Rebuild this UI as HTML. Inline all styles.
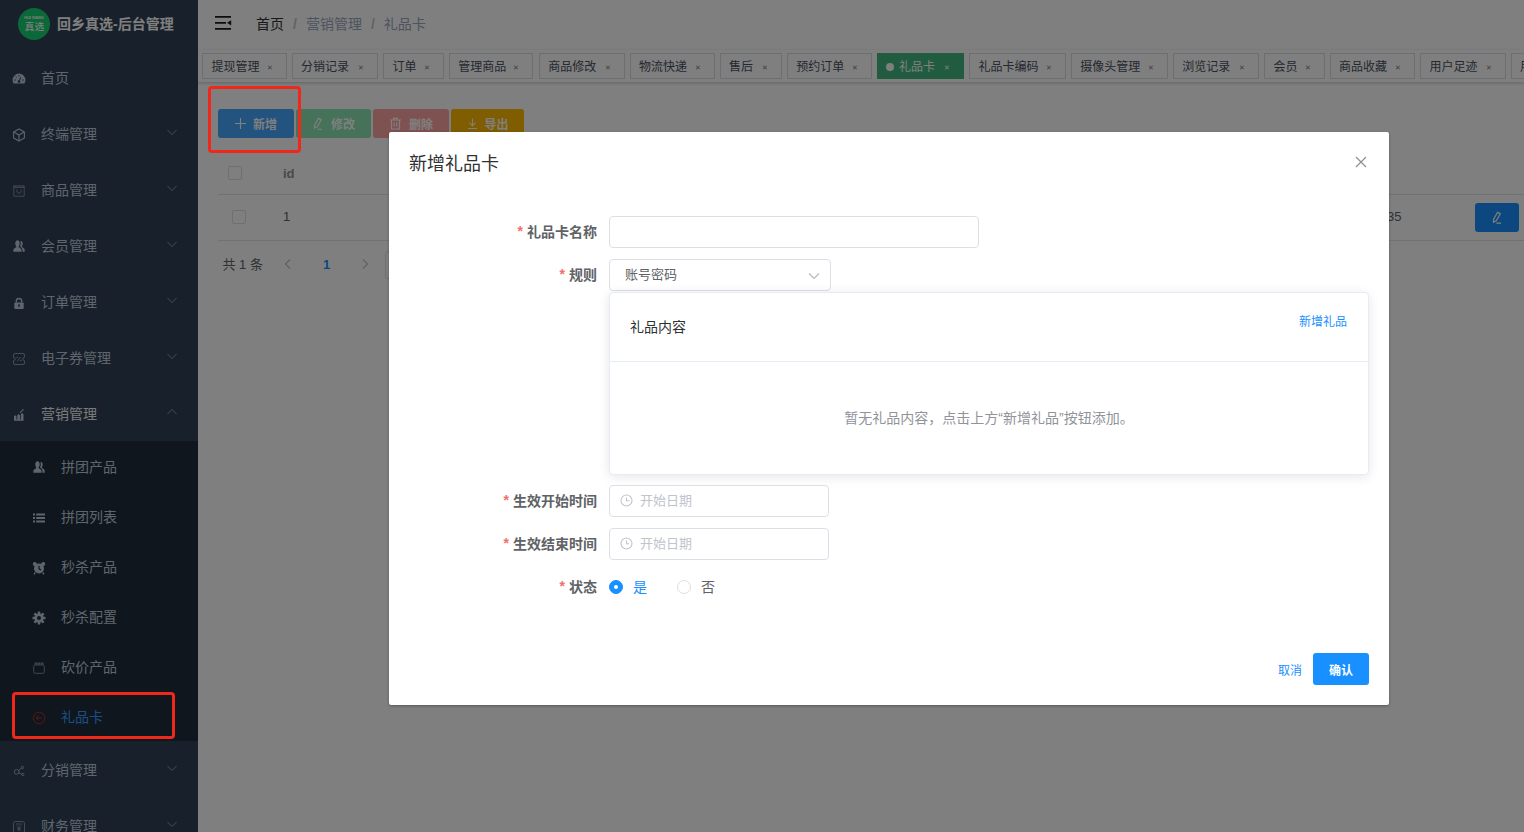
<!DOCTYPE html>
<html lang="zh-CN">
<head>
<meta charset="utf-8">
<title>回乡真选-后台管理</title>
<style>
*{box-sizing:border-box;margin:0;padding:0}
html,body{width:1524px;height:832px;overflow:hidden;background:#fff}
body{font-family:"Liberation Sans","Noto Sans CJK SC",sans-serif;font-size:14px;color:#606266;position:relative;-webkit-font-smoothing:antialiased}
.abs{position:absolute}
svg{display:block}
/* ---------- sidebar ---------- */
#sidebar{position:absolute;left:0;top:0;width:198px;height:832px;background:#304156;overflow:hidden}
#logo{position:absolute;left:0;top:0;width:198px;height:50px;background:#304156}
#logo .circ{position:absolute;left:18px;top:8px;width:32px;height:32px;border-radius:50%;background:#17d070;color:#fff;text-align:center}
#logo .circ .en{position:absolute;left:0;width:32px;top:8px;font-size:3.800px;line-height:5px;font-weight:bold;letter-spacing:0}
#logo .circ .cn{position:absolute;left:0;width:32px;top:12px;font-size:9.500px;line-height:14px;white-space:nowrap;letter-spacing:-1px;font-weight:500}
#logo .tt{position:absolute;left:57px;top:0;line-height:48px;font-size:14px;font-weight:bold;color:#fff;white-space:nowrap}
.mi{position:absolute;left:0;width:198px;height:56px;line-height:56px;color:#bfcbd9;font-size:14px}
.mi .ic{position:absolute;left:12px;top:22px;width:14px;height:14px}
.mi .tx{position:absolute;left:41px;top:0;white-space:nowrap}
.mi .ar{position:absolute;left:166px;top:19.500px;width:12px;height:12px}
#sub{position:absolute;left:0;top:441px;width:198px;height:300px;background:#1f2d3d}
.si{position:absolute;left:0;width:198px;height:50px;margin-top:1px;line-height:50px;color:#bfcbd9;font-size:14px}
.si .ic{position:absolute;left:32px;top:19px;width:14px;height:14px}
.si .tx{position:absolute;left:61px;top:0;white-space:nowrap}
/* ---------- main ---------- */
#main{position:absolute;left:198px;top:0;width:1326px;height:832px;background:#fff;overflow:hidden}
#navbar{position:absolute;left:0;top:0;width:1326px;height:50px;background:#fff;box-shadow:0 1px 4px rgba(0,21,41,.08)}
#bc{position:absolute;left:58px;top:0;line-height:48px;font-size:14px;white-space:nowrap;color:#97a8be}
#bc .h{color:#303133}
#bc .sep{color:#c0c4cc;margin:0 9px;font-weight:bold}
#tags{position:absolute;left:0;top:50px;width:1326px;height:33px;background:#fff;border-bottom:1px solid #d8dce5;box-shadow:0 1px 3px 0 rgba(0,0,0,.12),0 0 3px 0 rgba(0,0,0,.04)}
.tag{position:absolute;top:3px;height:26px;line-height:26px;border:1px solid #d8dce5;color:#495060;background:#fff;font-size:12px;padding-left:8px;white-space:nowrap;overflow:hidden}
.tag i{font-style:normal;position:absolute;right:12px;top:0;font-size:11px;color:#7b8190;transform:scale(.65)}
.tag.on{background:#42b983;border-color:#42b983;color:#fff}
.tag.on i{color:#fff}
.tag.on:before{content:"";display:inline-block;width:8px;height:8px;border-radius:50%;background:#fff;margin-right:5px;position:relative;top:0}
.btn{position:absolute;top:109px;height:29px;border-radius:3px;color:#fff;font-size:12px;line-height:29px;white-space:nowrap}
.btn svg{position:absolute;top:8px}
.btn span{position:absolute;top:2px;font-weight:700}
/* table */
#thead{position:absolute;left:20px;top:152px;width:1306px;height:43px;border-bottom:1px solid #dfe6ec}
#trow{position:absolute;left:20px;top:195px;width:1306px;height:46px;border-bottom:1px solid #dfe6ec}
.cb{position:absolute;width:14px;height:14px;border:1px solid #dcdfe6;border-radius:2px;background:#fff}
/* ---------- overlay ---------- */
#mask{position:absolute;left:0;top:0;width:1524px;height:832px;background:rgba(0,0,0,.5)}
/* ---------- dialog ---------- */
#dlg{position:absolute;left:389px;top:132px;width:1000px;height:573px;background:#fff;border-radius:2px;box-shadow:0 1px 3px rgba(0,0,0,.3)}
#dlg .title{position:absolute;left:20px;top:20px;font-size:18px;line-height:24px;color:#303133;white-space:nowrap}
.lab{position:absolute;left:20px;width:188px;text-align:right;font-size:14px;font-weight:bold;color:#606266;line-height:32px;white-space:nowrap}
.lab b{color:#f56c6c;font-weight:bold;margin-right:4px;position:relative;top:-1px}
.inp{position:absolute;height:32px;border:1px solid #dcdfe6;border-radius:4px;background:#fff;font-size:13px;line-height:30px;color:#606266;white-space:nowrap}
.ph{color:#c0c4cc}
#card{position:absolute;left:220px;top:160px;width:760px;height:183px;border:1px solid #e6ebf5;border-radius:4px;background:#fff;box-shadow:0 2px 12px 0 rgba(0,0,0,.1)}
#card .hd{position:absolute;left:0;top:0;width:758px;height:69px;border-bottom:1px solid #e6ebf5}
.radio{position:absolute;width:14px;height:14px;border-radius:50%;border:1px solid #dcdfe6;background:#fff}
.radio.on{border-color:#1890ff;background:#1890ff}
.radio.on:after{content:"";position:absolute;left:4px;top:4px;width:4px;height:4px;border-radius:50%;background:#fff}
/* ---------- annotations ---------- */
.red{position:absolute;border:3px solid #f0281c;border-radius:4px}
</style>
</head>
<body>
<!-- ================= BACKGROUND APP ================= -->
<div id="sidebar">
  <div id="logo">
    <div class="circ"><div class="en">HUI XIANG</div><div class="cn">真 选</div></div>
    <div class="tt">回乡真选-后台管理</div>
  </div>
  <div class="mi" style="top:50px"><svg class="ic" viewBox="0 0 14 14"><path d="M7 1.6A6.4 6.4 0 0 0 .6 8c0 1.4.4 2.6 1.100 3.600h10.600A6.300 6.300 0 0 0 13.400 8 6.400 6.400 0 0 0 7 1.600z" fill="#bfcbd9"/><g stroke="#304156" stroke-width="1" fill="none"><path d="M7 9.500l1.800-4.300M2.300 8h1.500M10.200 8h1.500M7 3.200v1.300M3.700 4.700l.9.900"/></g><circle cx="7" cy="9.600" r="1.300" fill="#304156"/></svg><span class="tx">首页</span></div>
  <div class="mi" style="top:106px"><svg class="ic" viewBox="0 0 14 14" fill="none" stroke="#bfcbd9" stroke-width="1.100" stroke-linejoin="round"><path d="M7 .9l5.400 3v6.200L7 13.100 1.600 10.100V3.900z"/><path d="M1.800 4L7 7l5.200-3M7 7v6"/></svg><span class="tx">终端管理</span><svg class="ar" viewBox="0 0 12 12" fill="none" stroke="#8f9baa" stroke-width="1"><path d="M1.500 4l4.500 4.500L10.500 4"/></svg></div>
  <div class="mi" style="top:162px"><svg class="ic" viewBox="0 0 14 14" fill="none" stroke="#7f8b9b" stroke-width="1"><path d="M1.800 1.800h10.400v10.400H1.800z"/><path d="M1.800 3.300h10.400" stroke-width="1.400"/><path d="M4.800 5.600v1.400a2.200 2.200 0 0 0 4.400 0V5.600"/></svg><span class="tx">商品管理</span><svg class="ar" viewBox="0 0 12 12" fill="none" stroke="#8f9baa" stroke-width="1"><path d="M1.500 4l4.500 4.500L10.500 4"/></svg></div>
  <div class="mi" style="top:218px"><svg class="ic" viewBox="0 0 14 14" fill="#bfcbd9" style="transform:translate(0,-.5px) scale(.86,1.080)"><path d="M5.300 1.200c1.500 0 2.500 1.200 2.500 2.900 0 1.200-.5 2.200-1.200 2.800v.7c1.600.5 3.400 1.400 3.400 2.700v1.500H.4v-1.500c0-1.300 1.800-2.200 3.400-2.700v-.7C3.100 6.300 2.700 5.300 2.700 4.100c0-1.700 1-2.900 2.600-2.900z"/><path d="M9.200 2c1.300 0 2.100 1 2.100 2.500 0 1-.4 1.900-1 2.400v.6c1.400.4 3.300 1.200 3.300 2.400v1.900h-2.500v-1.500c0-1.500-1.400-2.500-2.900-3.100.5-.8.800-1.900.8-3.100 0-.7-.1-1.300-.4-1.900.2-.1.400-.2.600-.2z"/></svg><span class="tx">会员管理</span><svg class="ar" viewBox="0 0 12 12" fill="none" stroke="#8f9baa" stroke-width="1"><path d="M1.500 4l4.500 4.500L10.500 4"/></svg></div>
  <div class="mi" style="top:274px"><svg class="ic" viewBox="0 0 14 14" style="transform:translate(0,.5px) scale(.9,.88)"><path d="M4 6V4.300a3 3 0 0 1 6 0V6" fill="none" stroke="#bfcbd9" stroke-width="1.500"/><rect x="1.800" y="5.800" width="10.400" height="7.400" rx="1" fill="#bfcbd9"/><circle cx="7" cy="9" r="1.100" fill="#304156"/><rect x="6.500" y="9.200" width="1" height="2" fill="#304156"/></svg><span class="tx">订单管理</span><svg class="ar" viewBox="0 0 12 12" fill="none" stroke="#8f9baa" stroke-width="1"><path d="M1.500 4l4.500 4.500L10.500 4"/></svg></div>
  <div class="mi" style="top:330px"><svg class="ic" viewBox="0 0 14 14" fill="none" stroke="#8d99a8" stroke-width="1"><path d="M3 1.500h8a1.500 1.500 0 0 1 1.500 1.500v2.300a1.700 1.700 0 0 0 0 3.400V11a1.500 1.500 0 0 1-1.500 1.500H3A1.500 1.500 0 0 1 1.500 11V8.700a1.700 1.700 0 0 0 0-3.400V3A1.500 1.500 0 0 1 3 1.500z"/><path d="M5.400 9l3.200-4" stroke-width=".9"/><circle cx="5.300" cy="5.500" r=".8" fill="#8d99a8" stroke="none"/><circle cx="8.700" cy="8.500" r=".8" fill="#8d99a8" stroke="none"/></svg><span class="tx">电子券管理</span><svg class="ar" viewBox="0 0 12 12" fill="none" stroke="#8f9baa" stroke-width="1"><path d="M1.500 4l4.500 4.500L10.500 4"/></svg></div>
  <div class="mi" style="top:386px;color:#f4f4f5"><svg class="ic" viewBox="0 0 14 14" fill="#bfcbd9"><path d="M2 12.800V8.300l1.200-1.100 1.200 1.100v3.300h.9V7.200l1.300-1.200 1.300 1.200v4.400h.9V6.300L10.100 5l1.400 1.300v6.500z"/><path d="M8 4.600l3.500-3.200" fill="none" stroke="#bfcbd9" stroke-width="1.100"/></svg><span class="tx">营销管理</span><svg class="ar" viewBox="0 0 12 12" fill="none" stroke="#8f9baa" stroke-width="1"><path d="M1.500 8L6 3.500 10.500 8"/></svg></div>
  <div id="sub">
    <div class="si" style="top:0"><svg class="ic" viewBox="0 0 14 14" fill="#bfcbd9" style="transform:translate(0,-.5px) scale(.86,1.080)"><path d="M5.300 1.200c1.500 0 2.500 1.200 2.500 2.900 0 1.200-.5 2.200-1.200 2.800v.7c1.600.5 3.400 1.400 3.400 2.700v1.500H.4v-1.500c0-1.300 1.800-2.200 3.400-2.700v-.7C3.100 6.300 2.700 5.300 2.700 4.100c0-1.700 1-2.900 2.600-2.900z"/><path d="M9.200 2c1.300 0 2.100 1 2.100 2.500 0 1-.4 1.900-1 2.400v.6c1.400.4 3.300 1.200 3.300 2.400v1.900h-2.500v-1.500c0-1.500-1.400-2.500-2.900-3.100.5-.8.800-1.900.8-3.100 0-.7-.1-1.300-.4-1.900.2-.1.400-.2.600-.2z"/></svg><span class="tx">拼团产品</span></div>
    <div class="si" style="top:50px"><svg class="ic" viewBox="0 0 14 14" fill="#bfcbd9"><path d="M1 2.500h2v2H1zM4.200 2.500H13v2H4.200zM1 6h2v2H1zM4.200 6H13v2H4.200zM1 9.500h2v2H1zM4.200 9.500H13v2H4.200z"/></svg><span class="tx">拼团列表</span></div>
    <div class="si" style="top:100px"><svg class="ic" viewBox="0 0 14 14" fill="#bfcbd9"><circle cx="2.800" cy="3" r="2"/><circle cx="11.200" cy="3" r="2"/><circle cx="7" cy="7.500" r="5"/><path d="M3.300 11.500l-1.300 1.800M10.700 11.500l1.300 1.800" stroke="#bfcbd9" stroke-width="1.300"/><path d="M7 4.800v3l2 1.200" fill="none" stroke="#1f2d3d" stroke-width="1.200"/></svg><span class="tx">秒杀产品</span></div>
    <div class="si" style="top:150px"><svg class="ic" viewBox="0 0 14 14"><g fill="#bfcbd9"><circle cx="7" cy="7" r="4.600"/><rect x="5.700" y=".5" width="2.600" height="13" rx=".4" transform="rotate(0 7 7)"/><rect x="5.700" y=".5" width="2.600" height="13" rx=".4" transform="rotate(45 7 7)"/><rect x="5.700" y=".5" width="2.600" height="13" rx=".4" transform="rotate(90 7 7)"/><rect x="5.700" y=".5" width="2.600" height="13" rx=".4" transform="rotate(135 7 7)"/></g><circle cx="7" cy="7" r="2" fill="#1f2d3d"/></svg><span class="tx">秒杀配置</span></div>
    <div class="si" style="top:200px"><svg class="ic" viewBox="0 0 14 14" fill="none" stroke="#7f8b9b" stroke-width="1"><rect x="1.700" y="4" width="10.600" height="8.300" rx="1.500"/><path d="M2.600 2.600h2.600M5.700 2.600h2.600M8.800 2.600h2.600" stroke-width="2.200"/></svg><span class="tx">砍价产品</span></div>
    <div class="si" style="top:250px;color:#3c9cff"><svg class="ic" viewBox="0 0 14 14" fill="none" stroke="#c02c1e" stroke-width=".9"><circle cx="7" cy="7" r="5.800"/><path d="M4 7h6M6.500 4.500L4 7l2.500 2.500" stroke-width=".9"/></svg><span class="tx">礼品卡</span></div>
  </div>
  <div class="mi" style="top:742px"><svg class="ic" viewBox="0 0 14 14" fill="none" stroke="#a3afbd" stroke-width="1.100" style="transform:scale(.88)"><circle cx="4.300" cy="8" r="2.700"/><circle cx="11" cy="3" r="1.300"/><circle cx="11.300" cy="11" r="1.300"/><path d="M6.600 6.500L9.800 3.800M6.900 9l3.200 1.500"/></svg><span class="tx">分销管理</span><svg class="ar" viewBox="0 0 12 12" fill="none" stroke="#8f9baa" stroke-width="1"><path d="M1.500 4l4.500 4.500L10.500 4"/></svg></div>
  <div class="mi" style="top:798px"><svg class="ic" viewBox="0 0 14 14" fill="none" stroke="#8d99a8" stroke-width="1"><rect x="1.500" y="1.500" width="11" height="11.500" rx="2"/><path d="M4 4h6" stroke-width=".9"/><path d="M5 5.500l2 2.500 2-2.500M7 8v3.200M5.200 8.300h3.600M5.200 9.800h3.600" stroke-width=".9"/></svg><span class="tx">财务管理</span><svg class="ar" viewBox="0 0 12 12" fill="none" stroke="#8f9baa" stroke-width="1"><path d="M1.500 4l4.500 4.500L10.500 4"/></svg></div>
</div>
<div id="main">
  <div id="navbar">
    <svg class="abs" style="left:17px;top:15px" width="17" height="16" viewBox="0 0 17 16" fill="none" stroke="#1a1a1a" stroke-width="1.800"><path d="M0 1.800h16M0 7.800h11M0 13.900h16"/><path d="M16.200 5.200L12 7.800l4.200 2.700z" fill="#1a1a1a" stroke="none"/></svg>
    <div id="bc"><span class="h">首页</span><span class="sep">/</span><span>营销管理</span><span class="sep">/</span><span>礼品卡</span></div>
  </div>
  <div id="tags">
    <div class="tag" style="left:4.4px;width:84.4px">提现管理<i>✕</i></div>
    <div class="tag" style="left:94.0px;width:85.5px">分销记录<i>✕</i></div>
    <div class="tag" style="left:185.4px;width:60.2px">订单<i>✕</i></div>
    <div class="tag" style="left:251.3px;width:84.2px">管理商品<i>✕</i></div>
    <div class="tag" style="left:341.2px;width:85.5px">商品修改<i>✕</i></div>
    <div class="tag" style="left:432.1px;width:84.6px">物流快递<i>✕</i></div>
    <div class="tag" style="left:522.0px;width:61.6px">售后<i>✕</i></div>
    <div class="tag" style="left:589.2px;width:84.6px">预约订单<i>✕</i></div>
    <div class="tag on" style="left:679.0px;width:86.7px">礼品卡<i>✕</i></div>
    <div class="tag" style="left:771.4px;width:96.3px">礼品卡编码<i>✕</i></div>
    <div class="tag" style="left:873.3px;width:96.3px">摄像头管理<i>✕</i></div>
    <div class="tag" style="left:975.3px;width:85.4px">浏览记录<i>✕</i></div>
    <div class="tag" style="left:1066.4px;width:60.4px">会员<i>✕</i></div>
    <div class="tag" style="left:1132.0px;width:84.7px">商品收藏<i>✕</i></div>
    <div class="tag" style="left:1222.4px;width:85.3px">用户足迹<i>✕</i></div>
    <div class="tag" style="left:1313.0px;width:60.0px">用户<i>✕</i></div>
  </div>
  <div class="btn" style="left:20px;width:76px;background:#46a6ff"><svg style="left:16px" width="13" height="13" viewBox="0 0 13 13" fill="none" stroke="#fff" stroke-width="1.150"><path d="M6.500 1v11M1 6.500h11"/></svg><span style="left:35px">新增</span></div>
  <div class="btn" style="left:98px;width:75px;background:#8ae4b2"><svg style="left:15px" width="13" height="13" viewBox="0 0 13 13" fill="none" stroke="#fff" stroke-width="1.150"><path d="M7.600 1.200l2.700 1.500-4 7.200-2.800 1.300.1-3zM6.300 12.200h4.700"/></svg><span style="left:35px">修改</span></div>
  <div class="btn" style="left:175px;width:76px;background:#ffa4a4"><svg style="left:16px" width="13" height="13" viewBox="0 0 13 13" fill="none" stroke="#fff" stroke-width="1.150"><path d="M1 3h11M4.500 3V1.300h4V3M2.500 3v9h8V3M5.200 5.500v4M7.800 5.500v4"/></svg><span style="left:36px">删除</span></div>
  <div class="btn" style="left:253.400px;width:72.300px;background:#ffba00"><svg style="left:15px" width="13" height="13" viewBox="0 0 13 13" fill="none" stroke="#fff" stroke-width="1.150"><path d="M6.500 1.500v7M3.500 5.800l3 3 3-3M2 11.500h9"/></svg><span style="left:33px">导出</span></div>
  <div id="thead"><div class="cb" style="left:10px;top:14px"></div><div class="abs" style="left:65px;top:0;line-height:44px;font-size:13px;font-weight:bold;color:#909399">id</div></div>
  <div id="trow"><div class="cb" style="left:14px;top:15px"></div><div class="abs" style="left:65px;top:0;line-height:44px;font-size:13px;color:#606266">1</div>
    <div class="abs" style="right:122.500px;top:0;line-height:44px;font-size:13px;color:#606266;white-space:nowrap">2024-05-16 10:21:35</div>
    <div class="abs" style="left:1257px;top:8px;width:44px;height:29px;border-radius:3px;background:#1890ff"><svg class="abs" style="left:15px;top:8px" width="13" height="13" viewBox="0 0 13 13" fill="none" stroke="#fff" stroke-width="1.200"><path d="M7.600 1.200l2.700 1.500-4 7.200-2.800 1.300.1-3zM6.300 12.200h4.700"/></svg></div>
  </div>
  <div class="abs" style="left:24.500px;top:250px;line-height:29px;font-size:13px;color:#606266;white-space:nowrap">共 1 条</div>
  <svg class="abs" style="left:84px;top:258px" width="12" height="12" viewBox="0 0 12 12" fill="none" stroke="#c0c4cc" stroke-width="1.300"><path d="M8 1.500L3.500 6 8 10.500"/></svg>
  <div class="abs" style="left:125px;top:250px;line-height:29px;font-size:13px;font-weight:bold;color:#1890ff">1</div>
  <svg class="abs" style="left:161px;top:258px" width="12" height="12" viewBox="0 0 12 12" fill="none" stroke="#c0c4cc" stroke-width="1.300"><path d="M4 1.500L8.500 6 4 10.500"/></svg>
  <div class="abs" style="left:187px;top:251px;width:100px;height:28px;border:1px solid #dcdfe6;border-radius:3px"></div>
</div>
<!-- ================= OVERLAY ================= -->
<div id="mask"></div>
<!-- ================= DIALOG ================= -->
<div id="dlg">
  <div class="title">新增礼品卡</div>
  <svg class="abs" style="left:966px;top:24px" width="12" height="12" viewBox="0 0 12 12" fill="none" stroke="#8a8d93" stroke-width="1.200"><path d="M1 1l10 10M11 1L1 11"/></svg>
  <div class="lab" style="top:84px"><b>*</b>礼品卡名称</div>
  <div class="inp" style="left:220px;top:84px;width:370px"></div>
  <div class="lab" style="top:127px"><b>*</b>规则</div>
  <div class="inp" style="left:220px;top:127px;width:222px;padding-left:15px">账号密码<svg class="abs" style="left:198px;top:10px" width="12" height="12" viewBox="0 0 12 12" fill="none" stroke="#b6bac2" stroke-width="1.200"><path d="M1 3.500l5 5 5-5"/></svg></div>
  <div id="card">
    <div class="hd"></div>
    <div class="abs" style="left:20px;top:18px;line-height:32px;font-size:14px;color:#303133;white-space:nowrap">礼品内容</div>
    <div class="abs" style="right:21px;top:19px;line-height:20px;font-size:12px;color:#1890ff;white-space:nowrap">新增礼品</div>
    <div class="abs" style="left:0;top:105px;width:758px;text-align:center;line-height:40px;font-size:14px;color:#909399;white-space:nowrap">暂无礼品内容，点击上方“新增礼品”按钮添加。</div>
  </div>
  <div class="lab" style="top:353px"><b>*</b>生效开始时间</div>
  <div class="inp" style="left:220px;top:353px;width:220px;padding-left:30px"><svg class="abs" style="left:10px;top:8px" width="13" height="13" viewBox="0 0 13 13" fill="none" stroke="#c0c4cc" stroke-width="1.100"><circle cx="6.500" cy="6.500" r="5.500"/><path d="M6.500 3.500v3.300h2.800"/></svg><span class="ph">开始日期</span></div>
  <div class="lab" style="top:396px"><b>*</b>生效结束时间</div>
  <div class="inp" style="left:220px;top:396px;width:220px;padding-left:30px"><svg class="abs" style="left:10px;top:8px" width="13" height="13" viewBox="0 0 13 13" fill="none" stroke="#c0c4cc" stroke-width="1.100"><circle cx="6.500" cy="6.500" r="5.500"/><path d="M6.500 3.500v3.300h2.800"/></svg><span class="ph">开始日期</span></div>
  <div class="lab" style="top:439px"><b>*</b>状态</div>
  <div class="radio on" style="left:220px;top:448px"></div>
  <div class="abs" style="left:244px;top:439px;line-height:32px;font-size:14px;color:#1890ff">是</div>
  <div class="radio" style="left:288px;top:448px"></div>
  <div class="abs" style="left:312px;top:439px;line-height:32px;font-size:14px;color:#606266">否</div>
  <div class="abs" style="left:889px;top:523px;line-height:32px;font-size:12px;color:#1890ff;white-space:nowrap">取消</div>
  <div class="abs" style="left:924px;top:521px;width:56px;height:32px;border-radius:3px;background:#1890ff;color:#fff;font-size:12px;font-weight:bold;line-height:36px;text-align:center">确认</div>
</div>
<!-- ================= ANNOTATIONS ================= -->
<div class="red" style="left:207.500px;top:85.500px;width:93px;height:67px"></div>
<div class="red" style="left:11.500px;top:692.300px;width:163px;height:46.500px"></div>
</body>
</html>
